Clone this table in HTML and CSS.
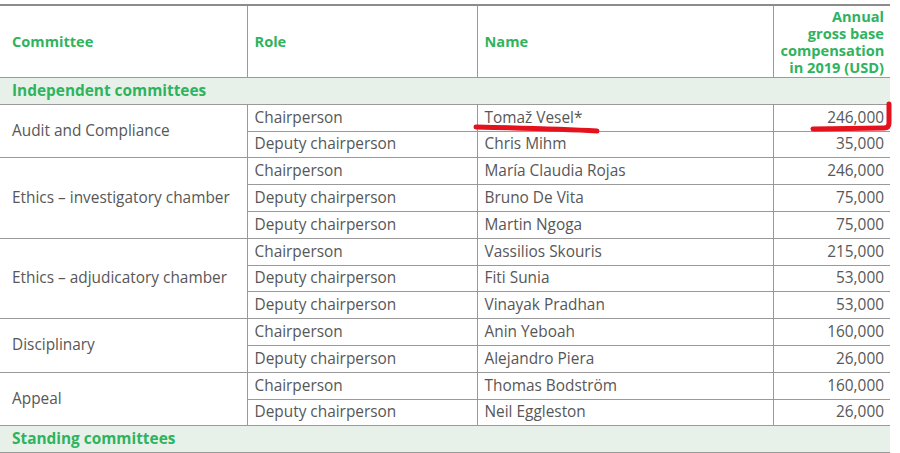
FILE: index.html
```html
<!DOCTYPE html>
<html>
<head>
<meta charset="utf-8">
<link rel="stylesheet" href="styles.css">
</head>
<body>
<div class="wrap">
<table class="comp">
  <colgroup>
    <col class="c1"><col class="c2"><col class="c3"><col class="c4">
  </colgroup>
  <thead>
    <tr class="head">
      <th class="first">Committee</th>
      <th>Role</th>
      <th>Name</th>
      <th class="num">Annual<br>gross base<br>compensation<br>in 2019 (USD)</th>
    </tr>
  </thead>
  <tbody>
    <tr class="section"><td colspan="4">Independent committees</td></tr>
    <tr><td class="first" rowspan="2">Audit and Compliance</td><td>Chairperson</td><td>Tomaž Vesel*</td><td class="num">246,000</td></tr>
    <tr><td>Deputy chairperson</td><td>Chris Mihm</td><td class="num">35,000</td></tr>
    <tr><td class="first" rowspan="3">Ethics – investigatory chamber</td><td>Chairperson</td><td>María Claudia Rojas</td><td class="num">246,000</td></tr>
    <tr><td>Deputy chairperson</td><td>Bruno De Vita</td><td class="num">75,000</td></tr>
    <tr><td>Deputy chairperson</td><td>Martin Ngoga</td><td class="num">75,000</td></tr>
    <tr><td class="first" rowspan="3">Ethics – adjudicatory chamber</td><td>Chairperson</td><td>Vassilios Skouris</td><td class="num">215,000</td></tr>
    <tr><td>Deputy chairperson</td><td>Fiti Sunia</td><td class="num">53,000</td></tr>
    <tr><td>Deputy chairperson</td><td>Vinayak Pradhan</td><td class="num">53,000</td></tr>
    <tr><td class="first" rowspan="2">Disciplinary</td><td>Chairperson</td><td>Anin Yeboah</td><td class="num">160,000</td></tr>
    <tr><td>Deputy chairperson</td><td>Alejandro Piera</td><td class="num">26,000</td></tr>
    <tr><td class="first" rowspan="2">Appeal</td><td>Chairperson</td><td>Thomas Bodström</td><td class="num">160,000</td></tr>
    <tr><td>Deputy chairperson</td><td>Neil Eggleston</td><td class="num">26,000</td></tr>
    <tr class="section"><td colspan="4">Standing committees</td></tr>
  </tbody>
</table>
<svg class="marks" width="900" height="453" viewBox="0 0 900 453">
  <path d="M476 127 C 520 128, 560 129, 597 131" stroke="#e3121c" stroke-width="5" fill="none" stroke-linecap="round"/>
  <path d="M813 129 L 884 128 Q 889 128 889 123 L 889 104" stroke="#e3121c" stroke-width="5" fill="none" stroke-linecap="round"/>
</svg>
</div>
</body>
</html>
```
FILE: styles.css
```css
html, body {
  margin: 0;
  padding: 0;
  background: #ffffff;
}
.wrap {
  position: relative;
  width: 900px;
  height: 453px;
  overflow: hidden;
  padding-top: 4px;
  box-sizing: border-box;
}
.comp {
  border-collapse: collapse;
  table-layout: fixed;
  width: 890px;
  font-family: "Open Sans", "Noto Sans", sans-serif;
  font-size: 15.4px;
  color: #575757;
}
.c1 { width: 247px; }
.c2 { width: 230px; }
.c3 { width: 296px; }
.c4 { width: 117px; }
.comp th, .comp td {
  border: 1px solid #9a9a9a;
  padding: 0 6px 0 7px;
  text-align: left;
  vertical-align: middle;
  white-space: nowrap;
  line-height: 18px;
}
.comp tr > :first-child { border-left: none; }
.comp tr > :last-child { border-right: none; }
.comp th.first, .comp td.first { padding-left: 12px; }
.head th {
  height: 71px;
  color: #2fb35e;
  font-weight: 700;
  font-size: 14.6px;
  border-top: 2px solid #8c8c8c;
  line-height: 17px;
  padding-top: 0;
  padding-bottom: 0;
}
.comp .num { text-align: right; padding-right: 6px; }
.comp tbody td { height: 25.8px; padding-top: 0; padding-bottom: 0; }
.section td {
  background: #e7f1ea;
  color: #2fb35e;
  font-weight: 700;
  padding-left: 12px;
}
.marks {
  position: absolute;
  left: 0;
  top: 0;
  pointer-events: none;
}
```
